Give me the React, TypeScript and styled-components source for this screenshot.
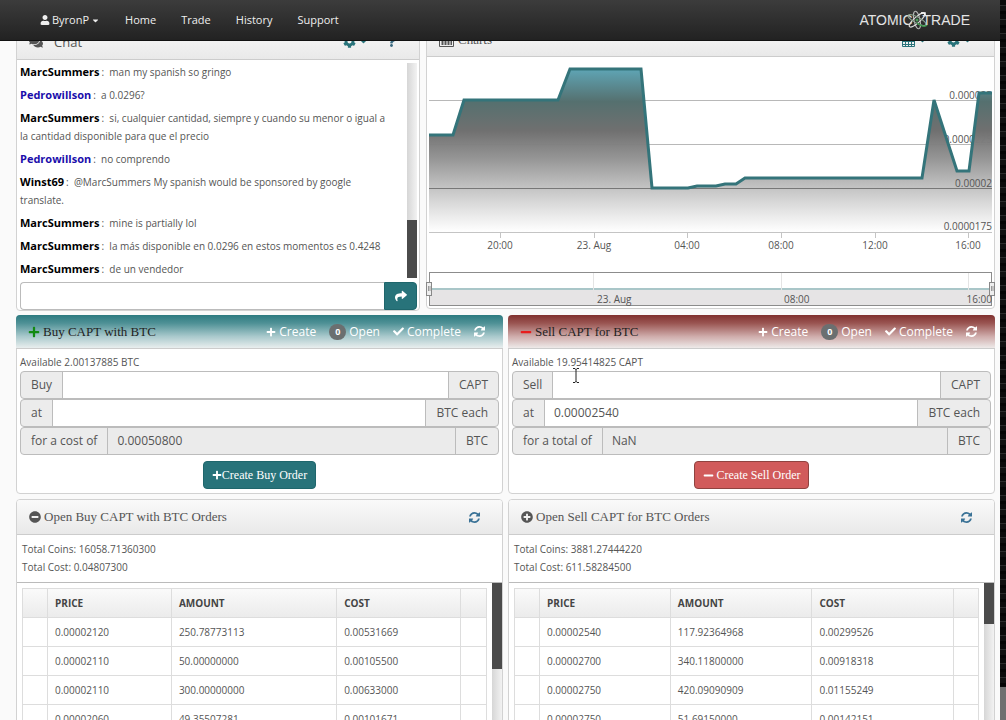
import React from "react";
import styled, { createGlobalStyle, css } from "styled-components";
import {
  FaUser,
  FaCaretDown,
  FaComments,
  FaCog,
  FaQuestion,
  FaShare,
  FaPlus,
  FaMinus,
  FaCheck,
  FaMinusCircle,
  FaPlusCircle,
} from "react-icons/fa";

const sans = `"Open Sans", "Liberation Sans", sans-serif`;
const serif = `"Liberation Serif", "Times New Roman", serif`;
const teal = "#28737a";

const Global = createGlobalStyle`
  *, *::before, *::after { box-sizing: border-box; }
  body { margin: 0; background: #fafafa; color: #555; font: 10px/18px ${sans}; overflow: hidden; }
  button, input { font: inherit; color: inherit; margin: 0; }
  p, h1, h2 { margin: 0; }
  a { color: inherit; text-decoration: none; }
`;

/* ---------- page frame ---------- */

const Shell = styled.div`
  display: grid;
  grid-template-columns: minmax(0, 1fr) 6px;
  grid-template-rows: minmax(0, 1fr);
  height: 100vh;
  overflow: hidden;
`;

const Page = styled.div`
  min-width: 0;
`;

const Edge = styled.div`
  display: flex;
  flex-direction: column;
  background: repeating-linear-gradient(#0b0b0b 0 5px, #2c2c2c 5px 6px, #111 6px 11px, #050505 11px 14px);

  &::after {
    content: "";
    height: 33px;
    margin-top: auto;
    background: #707070;
  }
`;

const NavBar = styled.header`
  position: relative;
  z-index: 2;
  display: flex;
  justify-content: space-between;
  align-items: center;
  height: 41px;
  padding: 0 30px 0 40px;
  background: linear-gradient(#3c3c3c, #222);
  border-bottom: 1px solid #111;
  color: #eee;
`;

const NavLinks = styled.nav`
  display: flex;
  align-items: center;
  gap: 25px;
`;

const NavLink = styled.a`
  display: flex;
  align-items: center;
  gap: 2px;
  font-size: 11px;
`;

const Brand = styled.a`
  display: flex;
  align-items: center;
  font: 14px/20px "Liberation Sans", Arial, sans-serif;
  color: #e4e4e4;
`;

const BrandMark = styled.svg`
  width: 26px;
  height: 22px;
  margin: 0 -8px;
`;

const Content = styled.main`
  display: flex;
  flex-direction: column;
  gap: 4px;
  margin-top: -18px;
  padding: 0 5px 0 16px;
`;

const TopRow = styled.div`
  display: grid;
  grid-template-columns: minmax(0, 404fr) minmax(0, 569fr);
  gap: 6px;
  align-items: start;
`;

const Columns = styled.div`
  display: grid;
  grid-template-columns: repeat(2, minmax(0, 1fr));
  gap: 5px;
`;

/* ---------- panels ---------- */

type Tone = "plain" | "buy" | "sell";

const Panel = styled.section`
  min-width: 0;
  background: #fff;
  border: 1px solid #d2d2d2;
  border-radius: 4px;
`;

const toneFill: Record<Tone, string> = {
  plain: "linear-gradient(#fafafa, #e9e9e9)",
  buy: "linear-gradient(#2c7a80, #4f9196 25%, #a9c9cc 65%, #e9eeee)",
  sell: "linear-gradient(#80312f, #9a5552 25%, #cfacab 65%, #eeeae9)",
};

const PanelHead = styled.div<{ $tone: Tone; $height: number }>`
  display: flex;
  align-items: center;
  justify-content: space-between;
  height: ${(p) => p.$height}px;
  padding: 0 22px 0 12px;
  background: ${(p) => toneFill[p.$tone]};
  border-bottom: 1px solid #ccc;
  border-radius: 3px 3px 0 0;
  ${(p) =>
    p.$tone !== "plain" &&
    css`
      margin: -1px -1px 0;
      padding: 0 18px 0 12px;
      border-radius: 4px 4px 0 0;
    `}
`;

const Title = styled.h2<{ $sans?: boolean; $dark?: boolean; $gap?: number }>`
  display: flex;
  align-items: center;
  gap: ${(p) => p.$gap ?? 3}px;
  font: 13px/18px ${(p) => (p.$sans ? sans : serif)};
  color: ${(p) => (p.$dark ? "#222" : "#555")};
`;

const HeadTools = styled.div<{ $gap: number }>`
  display: flex;
  align-items: center;
  gap: ${(p) => p.$gap}px;
  font-size: 12px;
`;

const ToolButton = styled.button<{ $color: string }>`
  display: flex;
  align-items: center;
  gap: 3px;
  padding: 0;
  border: 0;
  background: none;
  color: ${(p) => p.$color};
  cursor: pointer;
`;

const Count = styled.span`
  min-width: 17px;
  height: 16px;
  border-radius: 8px;
  background: #6b6f70;
  color: #fff;
  font-size: 9px;
  font-weight: 700;
  line-height: 16px;
  text-align: center;
`;

/* ---------- chat ---------- */

const ChatArea = styled.div`
  display: flex;
  justify-content: space-between;
  gap: 4px;
  padding: 3px 2px 4px 3px;
`;

const Messages = styled.div`
  display: flex;
  flex-direction: column;
  flex: 1;
  min-width: 0;
  gap: 5px;
  white-space: pre-line;
`;

const Author = styled.b<{ $own?: boolean }>`
  color: ${(p) => (p.$own ? "#1a0dab" : "#000")};
  font-size: 11px;
  margin-right: 2px;
`;

const Track = styled.div<{ $end?: boolean }>`
  display: flex;
  flex: none;
  flex-direction: column;
  justify-content: ${(p) => (p.$end ? "flex-end" : "flex-start")};
  width: 10px;
  background: linear-gradient(90deg, #d6d6d6, #f2f2f2);
`;

const Thumb = styled.div<{ $size: number }>`
  height: ${(p) => p.$size}px;
  background: #4b4b4b;
`;

const Composer = styled.form`
  display: flex;
  height: 28px;
  padding: 0 2px 0 3px;
  font-size: 11px;

  input {
    flex: 1;
    min-width: 0;
    padding: 0 8px;
    border: 1px solid #bbb;
    border-right: 0;
    border-radius: 4px 0 0 4px;
    background: #fff;
  }

  button {
    display: flex;
    align-items: center;
    justify-content: center;
    width: 33px;
    padding: 0;
    border: 1px solid #1f666c;
    border-radius: 0 4px 4px 0;
    background: ${teal};
    color: #fff;
  }
`;

/* ---------- chart ---------- */

const ChartSvg = styled.svg`
  display: block;
  width: calc(100% - 4px);
  height: auto;
  margin: 0 2px;
  overflow: visible;
  font: 10px ${sans};
  fill: #555;
`;

/* ---------- order forms ---------- */

const OrderBody = styled.form`
  position: relative;
  display: flex;
  flex-direction: column;
  padding: 4px 3px;
`;

const Available = styled.p`
  line-height: 18px;
`;

const Group = styled.div`
  display: flex;
  height: 28px;
  font-size: 12px;
  border: 1px solid #bcbcbc;
  border-radius: 4px;
  background: #ececec;

  label,
  span {
    padding: 0 10px;
    line-height: 26px;
    white-space: nowrap;
  }

  input {
    flex: 1;
    min-width: 0;
    padding: 0 9px;
    border: solid #bcbcbc;
    border-width: 0 1px;
    border-radius: 0;
    background: #fff;
  }

  input:read-only {
    background: #ebebeb;
  }
`;

const Submit = styled.button<{ $tone: "buy" | "sell" }>`
  display: flex;
  align-items: center;
  align-self: center;
  gap: ${(p) => (p.$tone === "buy" ? 0 : 3)}px;
  height: 28px;
  margin-top: 6px;
  padding: 0 8px;
  border: 1px solid ${(p) => (p.$tone === "buy" ? "#1f666c" : "#8f4340")};
  border-radius: 4px;
  background: ${(p) => (p.$tone === "buy" ? teal : "#d15b5b")};
  color: #fff;
  font: 12px/18px ${serif};
`;

const Pointer = styled.svg`
  position: absolute;
  left: 63px;
  top: 19px;
  width: 8px;
  height: 15px;
`;

/* ---------- order book ---------- */

const Totals = styled.div`
  padding: 5px 5px 6px;
  border-bottom: 1px solid #bbb;
`;

const BookScroll = styled.div`
  display: flex;
  gap: 5px;
  padding-left: 5px;
`;

const BookTable = styled.table`
  flex: 1;
  min-width: 0;
  width: 100%;
  margin-top: 5px;
  border-collapse: collapse;
  table-layout: fixed;

  th,
  td {
    height: 29px;
    padding: 0 7px;
    border: 1px solid #ddd;
    text-align: left;
    white-space: nowrap;
  }

  thead tr {
    background: linear-gradient(#fafafa, #ebebeb);
  }

  th {
    font-weight: 700;
    color: #444;
  }
`;

const Col = styled.col<{ $w: string }>`
  width: ${(p) => p.$w};
`;

/* ---------- icons ---------- */

const RefreshIcon = ({ size = 12 }: { size?: number }) => (
  <svg width={size} height={size} viewBox="0 128 1536 1536" fill="currentColor" aria-hidden="true">
    <path d="M1511 1056q0 5-1 7-64 268-268 434.500t-478 166.500q-146 0-282.500-55t-243.500-157l-129 129q-19 19-45 19t-45-19-19-45v-448q0-26 19-45t45-19h448q26 0 45 19t19 45-19 45l-137 137q71 66 161 102t187 36q134 0 250-65t186-179q11-17 53-117 8-23 30-23h192q13 0 22.500 9.500t9.500 22.500zM1536 256v448q0 26-19 45t-45 19h-448q-26 0-45-19t-19-45 19-45l138-138q-148-137-349-137-134 0-250 65t-186 179q-11 17-53 117-8 23-30 23h-199q-13 0-22.500-9.500t-9.500-22.500v-7q65-268 270-434.500t480-166.500q146 0 284 55.500t245 156.500l130-129q19-19 45-19t45 19 19 45z" />
  </svg>
);

const CalendarIcon = () => (
  <svg width="13" height="13" viewBox="0 0 13 13" fill="none" stroke={teal} aria-hidden="true">
    <path d="M.5 1.500h12v11H.5zM.5 4.500h12M3.500 4v8M6.500 4v8M9.500 4v8M1 7.500h11M1 10.500h11" />
  </svg>
);

const BarsIcon = () => (
  <svg width="15" height="13" viewBox="0 0 15 13" aria-hidden="true">
    <path d="M.5.5h14v12H.5z" fill="none" stroke="#555" />
    <path d="M2.500 6h2v5h-2zM5.500 3h2v8h-2zM8.500 5h2v6h-2zM11.500 2h1.500v9h-1.500z" fill="#555" />
  </svg>
);

const AtomMark = () => (
  <BrandMark viewBox="0 0 26 22" fill="none" aria-hidden="true">
    <ellipse cx="12" cy="11" rx="3" ry="9" stroke="#b8b8b8" transform="rotate(-12 12 11)" />
    <ellipse cx="12" cy="11" rx="3" ry="10" stroke="#dcdcdc" transform="rotate(48 12 11)" />
    <ellipse cx="12" cy="11" rx="3" ry="10" stroke="#8fa893" transform="rotate(-62 12 11)" />
    <path d="M12 14c4 3 8 4 10 2" stroke="#3f9a50" strokeWidth="1.500" />
    <circle cx="12" cy="11" r="1.500" fill="#4a9c58" />
    <path d="M16 4h4v3" stroke="#fff" strokeWidth="1.500" />
  </BrandMark>
);

/* ---------- data ---------- */

const messages = [
  { who: "MarcSummers", text: "man my spanish so gringo" },
  { who: "Pedrowillson", text: "a 0.0296?", own: true },
  {
    who: "MarcSummers",
    text: "si, cualquier cantidad, siempre y cuando su menor o igual a\nla cantidad disponible para que el precio",
  },
  { who: "Pedrowillson", text: "no comprendo", own: true },
  { who: "Winst69", text: "@MarcSummers My spanish would be sponsored by google\ntranslate." },
  { who: "MarcSummers", text: "mine is partially lol" },
  { who: "MarcSummers", text: "la más disponible en 0.0296 en estos momentos es 0.4248" },
  { who: "MarcSummers", text: "de un vendedor" },
];

const buyRows = [
  ["0.00002120", "250.78773113", "0.00531669"],
  ["0.00002110", "50.00000000", "0.00105500"],
  ["0.00002110", "300.00000000", "0.00633000"],
  ["0.00002060", "49.35507281", "0.00101671"],
];

const sellRows = [
  ["0.00002540", "117.92364968", "0.00299526"],
  ["0.00002700", "340.11800000", "0.00918318"],
  ["0.00002750", "420.09090909", "0.01155249"],
  ["0.00002750", "51.69150000", "0.00142151"],
];

const priceLine =
  "0,78 24,78 35,43 129,43 141,12 212,12 223,131 259,131 268,129 287,129 296,127 307,127 316,121 493,121 505,43 528,114 540,114 550,36 563,36";

const upperLabels: [number, string][] = [
  [42, "0.000025"],
  [86, "0.0000225"],
];

const lowerLabels: [number, string][] = [
  [130, "0.00002"],
  [173, "0.0000175"],
];

const xLabels: [number, string][] = [
  [71, "20:00"],
  [165, "23. Aug"],
  [258, "04:00"],
  [352, "08:00"],
  [446, "12:00"],
  [539, "16:00"],
];

/* ---------- sections ---------- */

const Chat = () => (
  <Panel>
    <PanelHead $tone="plain" $height={36}>
      <Title $sans $gap={11}>
        <FaComments size={14} /> Chat
      </Title>
      <HeadTools $gap={18}>
        <ToolButton $color={teal} aria-label="Chat settings">
          <FaCog size={13} />
          <FaCaretDown size={9} />
        </ToolButton>
        <ToolButton $color="#3b6a80" aria-label="Chat help">
          <FaQuestion size={11} />
        </ToolButton>
      </HeadTools>
    </PanelHead>
    <ChatArea>
      <Messages>
        {messages.map((m, i) => (
          <p key={i}>
            <Author $own={m.own}>{m.who}</Author>:&nbsp; {m.text}
          </p>
        ))}
      </Messages>
      <Track $end>
        <Thumb $size={58} />
      </Track>
    </ChatArea>
    <Composer>
      <input type="text" aria-label="Message" />
      <button type="button" aria-label="Send">
        <FaShare size={12} />
      </button>
    </Composer>
  </Panel>
);

const Handle = ({ x }: { x: number }) => (
  <g>
    <rect x={x - 2.5} y="225.500" width="5" height="13" fill="#eee" stroke="#888" />
    <path d={`M${x - 0.5} 229v5M${x + 1} 229v5`} stroke="#999" />
  </g>
);

const Labels = ({ items }: { items: [number, string][] }) => (
  <>
    {items.map(([y, t]) => (
      <text key={t} x="563" y={y} textAnchor="end">
        {t}
      </text>
    ))}
  </>
);

const Charts = () => (
  <Panel>
    <PanelHead $tone="plain" $height={33}>
      <Title $gap={4}>
        <BarsIcon /> Charts
      </Title>
      <HeadTools $gap={20}>
        <ToolButton $color={teal} aria-label="Date range">
          <CalendarIcon />
          <FaCaretDown size={9} />
        </ToolButton>
        <ToolButton $color={teal} aria-label="Chart settings">
          <FaCog size={13} />
          <FaCaretDown size={9} />
        </ToolButton>
      </HeadTools>
    </PanelHead>
    <ChartSvg viewBox="0 0 563 251" role="img" aria-label="Price history">
      <defs>
        <linearGradient id="area" gradientUnits="userSpaceOnUse" x1="0" y1="12" x2="0" y2="175">
          <stop offset="0" stopColor="#5fa5b5" />
          <stop offset=".2" stopColor="#55706f" />
          <stop offset=".38" stopColor="#707070" />
          <stop offset=".55" stopColor="#909090" stopOpacity=".95" />
          <stop offset="1" stopColor="#a0a0a0" stopOpacity="0" />
        </linearGradient>
      </defs>
      <path d="M0 43.500h563M0 87.500h563M0 131.500h563" stroke="#b8b8b8" />
      <Labels items={upperLabels} />
      <polygon points={`0,175 ${priceLine} 563,175`} fill="url(#area)" />
      <path d="M0 131.500h563" stroke="#777" />
      <polyline points={priceLine} fill="none" stroke="#34747a" strokeWidth="3" />
      <Labels items={lowerLabels} />
      <path d="M0 175.500h563" stroke="#c4c4c4" />
      {xLabels.map(([x, t]) => (
        <g key={t}>
          <path d={`M${x + 0.5} 176v5`} stroke="#c4c4c4" />
          <text x={x} y="192" textAnchor="middle">
            {t}
          </text>
        </g>
      ))}
      <rect x="0" y="232" width="563" height="17" fill="#e6e4e5" />
      <path d="M0 232h563" stroke="#a9c6c8" strokeWidth="2" />
      <path d="M164.500 216v33M352.500 216v33M539.500 216v33" stroke="#e4e4e4" />
      <rect x=".5" y="215.500" width="562" height="33" fill="none" stroke="#8c8c8c" />
      <text x="168" y="246">
        23. Aug
      </text>
      <text x="355" y="246">
        08:00
      </text>
      <text x="563" y="246" textAnchor="end">
        16:00
      </text>
      <Handle x={0} />
      <Handle x={563} />
    </ChartSvg>
  </Panel>
);

interface OrderFormProps {
  tone: "buy" | "sell";
  title: string;
  available: string;
  verb: string;
  price: string;
  totalLabel: string;
  total: string;
  submit: string;
}

const OrderForm = (p: OrderFormProps) => (
  <Panel>
    <PanelHead $tone={p.tone} $height={34}>
      <Title $dark>
        {p.tone === "buy" ? <FaPlus size={12} color="#128a12" /> : <FaMinus size={12} color="#e81c1c" />}
        {p.title}
      </Title>
      <HeadTools $gap={13}>
        <ToolButton $color="#fff">
          <FaPlus size={10} />
          Create
        </ToolButton>
        <ToolButton $color="#fff">
          <Count>0</Count>
          Open
        </ToolButton>
        <ToolButton $color="#fff">
          <FaCheck size={11} />
          Complete
        </ToolButton>
        <ToolButton $color="#fff" aria-label="Refresh">
          <RefreshIcon size={11} />
        </ToolButton>
      </HeadTools>
    </PanelHead>
    <OrderBody>
      <Available>Available {p.available}</Available>
      <Group>
        <label htmlFor={`${p.tone}-amount`}>{p.verb}</label>
        <input id={`${p.tone}-amount`} type="text" />
        <span>CAPT</span>
      </Group>
      <Group>
        <label htmlFor={`${p.tone}-price`}>at</label>
        <input id={`${p.tone}-price`} type="text" defaultValue={p.price} />
        <span>BTC each</span>
      </Group>
      <Group>
        <label htmlFor={`${p.tone}-total`}>{p.totalLabel}</label>
        <input id={`${p.tone}-total`} type="text" readOnly value={p.total} />
        <span>BTC</span>
      </Group>
      <Submit type="button" $tone={p.tone}>
        {p.tone === "buy" ? <FaPlus size={10} /> : <FaMinus size={11} />}
        {p.submit}
      </Submit>
      {p.tone === "sell" && (
        <Pointer viewBox="0 0 8 15" fill="none" stroke="#222" aria-hidden="true">
          <path d="M1 .5h2l1 1 1-1h2M4 1v13M1 14.500h2l1-1 1 1h2" />
        </Pointer>
      )}
    </OrderBody>
  </Panel>
);

interface OrderBookProps {
  title: string;
  icon: React.ReactNode;
  coins: string;
  cost: string;
  rows: string[][];
  cols: string[];
  thumb: number;
}

const OrderBook = (p: OrderBookProps) => (
  <Panel>
    <PanelHead $tone="plain" $height={35}>
      <Title>
        {p.icon}
        {p.title}
      </Title>
      <ToolButton $color="#3a7296" aria-label="Refresh orders">
        <RefreshIcon size={11} />
      </ToolButton>
    </PanelHead>
    <Totals>
      <p>Total Coins: {p.coins}</p>
      <p>Total Cost: {p.cost}</p>
    </Totals>
    <BookScroll>
      <BookTable>
        <colgroup>
          {p.cols.map((w, i) => (
            <Col key={i} $w={w} />
          ))}
        </colgroup>
        <thead>
          <tr>
            <th />
            <th>PRICE</th>
            <th>AMOUNT</th>
            <th>COST</th>
            <th />
          </tr>
        </thead>
        <tbody>
          {p.rows.map((r, i) => (
            <tr key={i}>
              <td />
              <td>{r[0]}</td>
              <td>{r[1]}</td>
              <td>{r[2]}</td>
              <td />
            </tr>
          ))}
        </tbody>
      </BookTable>
      <Track>
        <Thumb $size={p.thumb} />
      </Track>
    </BookScroll>
  </Panel>
);

export default function App() {
  return (
    <>
      <Global />
      <Shell>
        <Page>
          <NavBar>
            <NavLinks>
              <NavLink href="#account">
                <FaUser size={10} />
                ByronP
                <FaCaretDown size={9} />
              </NavLink>
              <NavLink href="#home">Home</NavLink>
              <NavLink href="#trade">Trade</NavLink>
              <NavLink href="#history">History</NavLink>
              <NavLink href="#support">Support</NavLink>
            </NavLinks>
            <Brand href="#home">
              ATOMIC
              <AtomMark />
              TRADE
            </Brand>
          </NavBar>
          <Content>
            <TopRow>
              <Chat />
              <Charts />
            </TopRow>
            <Columns>
              <OrderForm
                tone="buy"
                title="Buy CAPT with BTC"
                available="2.00137885 BTC"
                verb="Buy"
                price=""
                totalLabel="for a cost of"
                total="0.00050800"
                submit="Create Buy Order"
              />
              <OrderForm
                tone="sell"
                title="Sell CAPT for BTC"
                available="19.95414825 CAPT"
                verb="Sell"
                price="0.00002540"
                totalLabel="for a total of"
                total="NaN"
                submit="Create Sell Order"
              />
              <OrderBook
                title="Open Buy CAPT with BTC Orders"
                icon={<FaMinusCircle size={12} />}
                coins="16058.71360300"
                cost="0.04807300"
                rows={buyRows}
                cols={["25px", "26.7%", "auto", "26.7%", "26px"]}
                thumb={86}
              />
              <OrderBook
                title="Open Sell CAPT for BTC Orders"
                icon={<FaPlusCircle size={12} />}
                coins="3881.27444220"
                cost="611.58284500"
                rows={sellRows}
                cols={["25px", "28.2%", "auto", "30.5%", "25px"]}
                thumb={41}
              />
            </Columns>
          </Content>
        </Page>
        <Edge />
      </Shell>
    </>
  );
}
